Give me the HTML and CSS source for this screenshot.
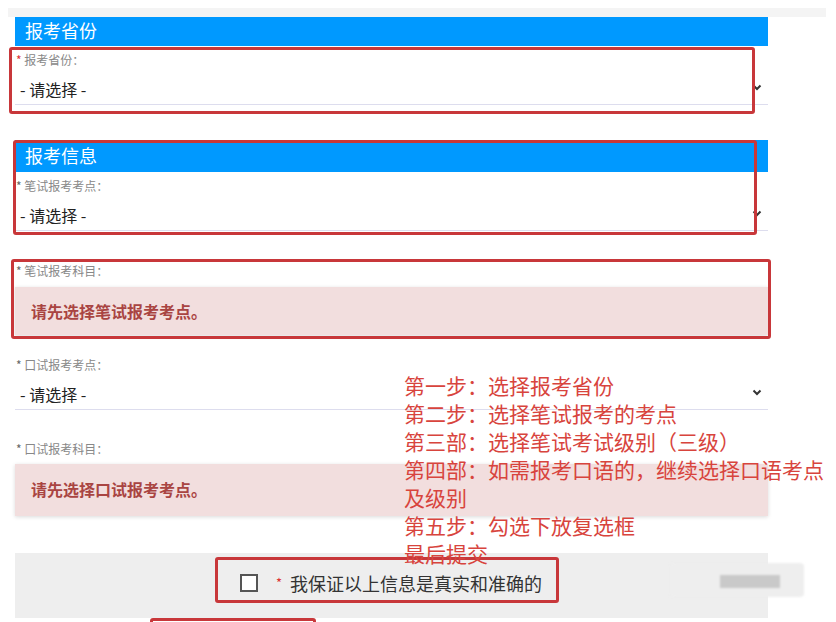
FILE: index.html
```html
<!DOCTYPE html>
<html lang="zh-CN">
<head>
    <meta charset="UTF-8">
    <meta name="viewport" content="width=device-width, initial-scale=1.0">
    <title>报考信息</title>
    <link rel="stylesheet" href="styles.css">
</head>
<body>
<div class="page">
    <div class="topbar"></div>

    <div class="panel">
        <!-- 报考省份 -->
        <h2 class="panel-title">报考省份</h2>
        <div class="form-group first">
            <label class="field-label"><span class="req red">*</span> 报考省份：</label>
            <div class="select">
                <span>- 请选择 -</span>
                <svg class="chevron" width="10" height="7" viewBox="0 0 10 7"><path d="M1.5 1.5l3.5 3.5 3.5-3.5" fill="none" stroke="#333" stroke-width="2"/></svg>
            </div>
        </div>

        <!-- 报考信息 -->
        <h2 class="panel-title tall">报考信息</h2>
        <div class="form-group first">
            <label class="field-label"><span class="req">*</span> 笔试报考考点：</label>
            <div class="select">
                <span>- 请选择 -</span>
                <svg class="chevron" width="10" height="7" viewBox="0 0 10 7"><path d="M1.5 1.5l3.5 3.5 3.5-3.5" fill="none" stroke="#333" stroke-width="2"/></svg>
            </div>
        </div>

        <div class="form-group g3">
            <label class="field-label"><span class="req">*</span> 笔试报考科目：</label>
            <div class="alert">请先选择笔试报考考点。</div>
        </div>

        <div class="form-group g4">
            <label class="field-label"><span class="req">*</span> 口试报考考点：</label>
            <div class="select">
                <span>- 请选择 -</span>
                <svg class="chevron" width="10" height="7" viewBox="0 0 10 7"><path d="M1.5 1.5l3.5 3.5 3.5-3.5" fill="none" stroke="#333" stroke-width="2"/></svg>
            </div>
        </div>

        <div class="form-group g5">
            <label class="field-label"><span class="req">*</span> 口试报考科目：</label>
            <div class="alert tall">请先选择口试报考考点。</div>
        </div>

        <!-- 保证 -->
        <div class="agree-bar">
            <span class="checkbox"></span>
            <span class="agree-req">*</span>
            <span class="agree-text">我保证以上信息是真实和准确的</span>
        </div>
    </div>

    <!-- 标注 -->
    <div class="mark mark-1"></div>
    <div class="mark mark-2"></div>
    <div class="mark mark-3"></div>
    <div class="mark mark-4"></div>
    <div class="mark mark-5"></div>

    <div class="steps">
        <p>第一步：选择报考省份</p>
        <p>第二步：选择笔试报考的考点</p>
        <p>第三部：选择笔试考试级别（三级）</p>
        <p>第四部：如需报考口语的，继续选择口语考点及级别</p>
        <p>第五步：勾选下放复选框</p>
        <p>最后提交</p>
    </div>

    <!-- 马赛克 -->
    <div class="mosaic">
        <div class="mosaic-bar"></div>
    </div>
</div>
</body>
</html>
```

FILE: styles.css
```css
/* General */
body {
    margin: 0;
    background: #fff;
    font-family: "Noto Sans CJK SC", "Noto Sans", sans-serif;
    color: #333;
}

.page {
    position: relative;
    width: 836px;
    height: 622px;
    overflow: hidden;
}

.topbar {
    margin: 8px 10px 0 8px;
    height: 9px;
    background-color: #f4f4f4;
}

.panel {
    margin-left: 15px;
    width: 753px;
}

/* Blue section titles */
.panel-title {
    margin: 0;
    height: 29px;
    line-height: 27px;
    padding-left: 10px;
    background-color: #0099ff;
    color: #fff;
    font-size: 18px;
    font-weight: normal;
}

.panel-title.tall {
    margin-top: 35px;
    height: 32px;
    line-height: 31px;
}

/* Form rows */
.form-group.first { margin-top: 4px; }
.form-group.g3 { margin-top: 30px; }
.form-group.g4 { margin-top: 20px; }
.form-group.g5 { margin-top: 29px; }

.field-label {
    display: block;
    height: 20px;
    line-height: 20px;
    padding-left: 1px;
    font-size: 12px;
    color: #888;
}

.req {
    color: #666;
}

.req.red {
    color: #d33;
}

.select {
    display: flex;
    align-items: center;
    justify-content: space-between;
    height: 35px;
    padding: 3px 6px 0 5px;
    box-sizing: border-box;
    border-bottom: 1px solid #dde;
    font-size: 16px;
    color: #222;
}

.chevron {
    margin-top: -3px;
}

.alert {
    margin-top: 6px;
    height: 48px;
    line-height: 48px;
    padding-left: 16px;
    background-color: #f2dede;
    color: #a94442;
    font-size: 16px;
    font-weight: bold;
    box-shadow: 0 1px 4px rgba(0, 0, 0, 0.15);
}

.alert.tall {
    margin-top: 5px;
    height: 52px;
    line-height: 50px;
}

/* Agreement bar */
.agree-bar {
    margin-top: 37px;
    height: 65px;
    background-color: #eee;
    display: flex;
    align-items: center;
    justify-content: center;
    padding-right: 1px;
}

.checkbox {
    width: 14px;
    height: 14px;
    border: 2px solid #555;
    background: #fff;
    margin-top: -6px;
}

.agree-req {
    margin-left: 18px;
    margin-top: -6px;
    color: #d33;
    font-size: 13px;
}

.agree-text {
    margin-left: 8px;
    margin-top: -6px;
    font-size: 18px;
    color: #333;
}

/* Red annotation boxes drawn over the form */
.mark {
    position: absolute;
    border: 3px solid #c8373a;
    border-radius: 3px;
}

.mark-1 { left: 9px;   top: 47px;  width: 740px; height: 61px; }
.mark-2 { left: 13px;  top: 140px; width: 738px; height: 89px; }
.mark-3 { left: 11px;  top: 259px; width: 754px; height: 74px; }
.mark-4 { left: 215px; top: 557px; width: 338px; height: 40px; }
.mark-5 { left: 150px; top: 618px; width: 160px; height: 40px; }

.steps {
    position: absolute;
    left: 404px;
    top: 371px;
    width: 424px;
    color: #d8443d;
    font-size: 21px;
    line-height: 28px;
}

.steps p {
    margin: 0;
}

/* Blurred block on the right */
.mosaic {
    position: absolute;
    left: 670px;
    top: 563px;
    width: 134px;
    height: 34px;
    background-color: #eeeeee;
    border-radius: 4px;
    filter: blur(1px);
}

.mosaic-bar {
    position: absolute;
    left: 50px;
    top: 12px;
    width: 60px;
    height: 13px;
    background-color: #c9c9c9;
}
```
